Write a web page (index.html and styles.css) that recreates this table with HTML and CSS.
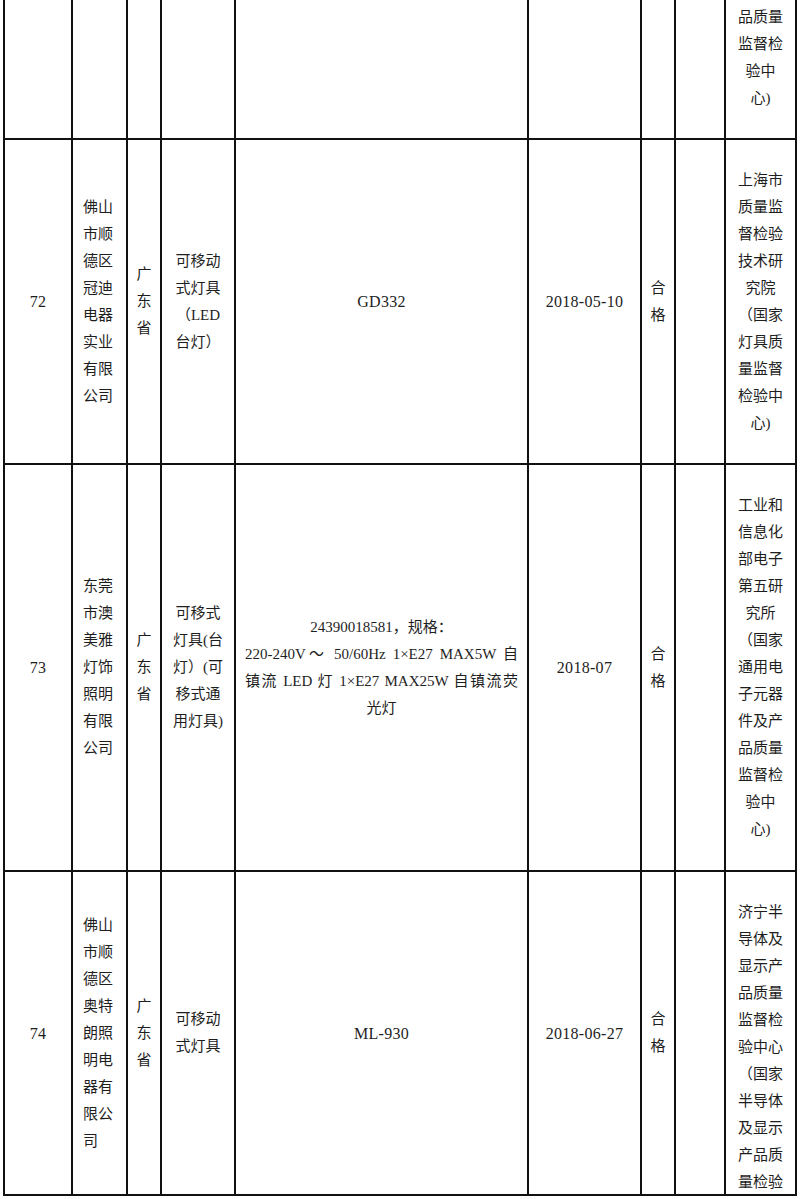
FILE: index.html
```html
<!DOCTYPE html>
<html lang="zh-CN">
<head>
<meta charset="utf-8">
<title>产品质量抽查结果</title>
<link rel="stylesheet" href="styles.css">
</head>
<body>
<div class="sheet">
  <!-- row 71 (continued from previous page) -->
  <div class="c"></div>
  <div class="c"></div>
  <div class="c"></div>
  <div class="c"></div>
  <div class="c"></div>
  <div class="c"></div>
  <div class="c"></div>
  <div class="c"></div>
  <div class="c top first"><div class="t">品质量<br>监督检<br>验中<br>心)</div></div>

  <!-- row 72 -->
  <div class="c num"><div class="t">72</div></div>
  <div class="c left"><div class="t">佛山<br>市顺<br>德区<br>冠迪<br>电器<br>实业<br>有限<br>公司</div></div>
  <div class="c"><div class="t">广<br>东<br>省</div></div>
  <div class="c"><div class="t">可移动<br>式灯具<br>（LED<br>台灯）</div></div>
  <div class="c num"><div class="t">GD332</div></div>
  <div class="c num"><div class="t">2018-05-10</div></div>
  <div class="c"><div class="t">合<br>格</div></div>
  <div class="c"></div>
  <div class="c"><div class="t">上海市<br>质量监<br>督检验<br>技术研<br>究院<br>（国家<br>灯具质<br>量监督<br>检验中<br>心)</div></div>

  <!-- row 73 -->
  <div class="c num"><div class="t">73</div></div>
  <div class="c left"><div class="t">东莞<br>市澳<br>美雅<br>灯饰<br>照明<br>有限<br>公司</div></div>
  <div class="c"><div class="t">广<br>东<br>省</div></div>
  <div class="c"><div class="t">可移式<br>灯具(台<br>灯）(可<br>移式通<br>用灯具)</div></div>
  <div class="c spec">
    <div class="t">
      <div class="ln">24390018581，规格：</div>
      <div class="ln jf">220-240V～ 50/60Hz 1×E27 MAX5W 自</div>
      <div class="ln jf">镇流 LED 灯 1×E27 MAX25W 自镇流荧</div>
      <div class="ln">光灯</div>
    </div>
  </div>
  <div class="c num"><div class="t">2018-07</div></div>
  <div class="c"><div class="t">合<br>格</div></div>
  <div class="c"></div>
  <div class="c"><div class="t">工业和<br>信息化<br>部电子<br>第五研<br>究所<br>（国家<br>通用电<br>子元器<br>件及产<br>品质量<br>监督检<br>验中<br>心)</div></div>

  <!-- row 74 (continues on next page) -->
  <div class="c num"><div class="t">74</div></div>
  <div class="c left"><div class="t">佛山<br>市顺<br>德区<br>奥特<br>朗照<br>明电<br>器有<br>限公<br>司</div></div>
  <div class="c"><div class="t">广<br>东<br>省</div></div>
  <div class="c"><div class="t">可移动<br>式灯具</div></div>
  <div class="c num"><div class="t">ML-930</div></div>
  <div class="c num"><div class="t">2018-06-27</div></div>
  <div class="c"><div class="t">合<br>格</div></div>
  <div class="c"></div>
  <div class="c top last"><div class="t">济宁半<br>导体及<br>显示产<br>品质量<br>监督检<br>验中心<br>（国家<br>半导体<br>及显示<br>产品质<br>量检验</div></div>
</div>
</body>
</html>
```

FILE: styles.css
```css
html, body {
  margin: 0;
  padding: 0;
  background: #ffffff;
}

body {
  font-family: "Liberation Serif", "Noto Sans CJK SC", serif;
  font-size: 15px;
  line-height: 27px;
  color: #1e1e1e;
}

.sheet {
  display: grid;
  grid-template-columns: 68px 55px 34px 74px 293px 113px 34px 50px 71px;
  grid-template-rows: 140px 325px 407px 324px;
  width: 794px;
  margin-left: 3px;
  border-left: 2px solid #111;
}

.c {
  box-sizing: border-box;
  display: flex;
  align-items: center;
  justify-content: center;
  text-align: center;
  border-right: 2px solid #111;
  border-bottom: 2px solid #111;
  overflow: hidden;
  min-width: 0;
}

.c.num {
  font-size: 16px;
  letter-spacing: 0.3px;
}

.c.left {
  justify-content: flex-start;
  text-align: left;
  padding-left: 10px;
}

.c.top {
  align-items: flex-start;
}

.c.first {
  padding-top: 4px;
}

.c.last {
  padding-top: 27px;
}

.t {
  white-space: nowrap;
}

.c.spec {
  padding: 0 9px;
}

.c.spec .t {
  width: 273px;
}

.ln {
  text-align: center;
  white-space: nowrap;
}

.ln.jf {
  white-space: normal;
  text-align: justify;
  text-align-last: justify;
}
```
